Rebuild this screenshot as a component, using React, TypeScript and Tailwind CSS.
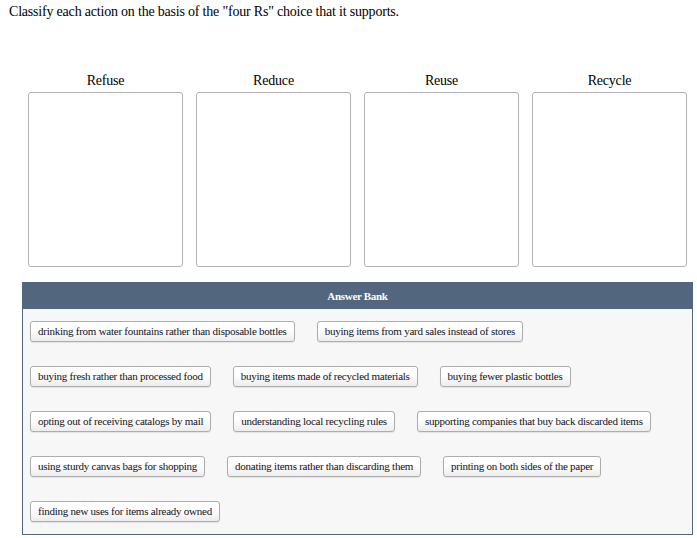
import React from "react";

const rows: string[][] = [
  ["drinking from water fountains rather than disposable bottles", "buying items from yard sales instead of stores"],
  ["buying fresh rather than processed food", "buying items made of recycled materials", "buying fewer plastic bottles"],
  ["opting out of receiving catalogs by mail", "understanding local recycling rules", "supporting companies that buy back discarded items"],
  ["using sturdy canvas bags for shopping", "donating items rather than discarding them", "printing on both sides of the paper"],
  ["finding new uses for items already owned"],
];

const cols = ["Refuse", "Reduce", "Reuse", "Recycle"];

export default function App() {
  return (
    <div className="w-[697px] h-[538px] bg-white text-black font-['Liberation_Serif','Times_New_Roman',serif]">
      <div className="pt-[3px] pl-[9px] text-[14px] leading-[18px] tracking-[-0.2px]">
        Classify each action on the basis of the "four Rs" choice that it supports.
      </div>
      <div className="mt-[51px] pl-[28px] flex gap-[13px]">
        {cols.map((c) => (
          <div key={c} className="w-[155px] flex flex-col items-center">
            <div className="text-[14px] leading-[18px] h-[20px] tracking-[-0.2px]">{c}</div>
            <div className="w-[155px] h-[175px] border border-[#b3b3b3] rounded-[3px] bg-white" />
          </div>
        ))}
      </div>
      <div className="mt-[15px] ml-[22px] w-[671px] h-[253px] border border-[#52667d] bg-[#f7f7f7]">
        <div className="h-[26px] bg-[#52667d] text-white font-bold text-[11px] tracking-[-0.3px] flex items-center justify-center">
          Answer Bank
        </div>
        <div className="pt-[12px] pl-[7px] flex flex-col gap-[24px]">
          {rows.map((r, i) => (
            <div key={i} className="flex gap-[22px]">
              {r.map((t) => (
                <div
                  key={t}
                  className="h-[21px] px-[7px] flex items-center text-[11px] tracking-[-0.25px] text-[#111122] border border-[#adadad] rounded-[3px] bg-gradient-to-b from-white from-40% to-[#ededed] shadow-[0_1px_1px_rgba(0,0,0,0.08)] whitespace-nowrap"
                >
                  {t}
                </div>
              ))}
            </div>
          ))}
        </div>
      </div>
    </div>
  );
}
